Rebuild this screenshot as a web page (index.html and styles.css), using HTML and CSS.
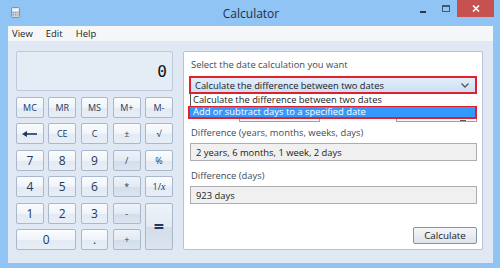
FILE: index.html
```html
<!DOCTYPE html>
<html lang="en">

<head>
    <meta charset="UTF-8">
    <title>Calculator</title>
    <link rel="stylesheet" href="styles.css">
</head>

<body>
    <div class="window">

        <!-- Title bar -->
        <div class="titlebar">
            <svg class="app-icon" width="9" height="11" viewBox="0 0 9 11">
                <rect x="0.5" y="0.5" width="8" height="10" rx="1" fill="#c9d6e6" stroke="#7d93ad"/>
                <rect x="1.5" y="1.5" width="6" height="2.5" fill="#f2f6fb"/>
                <rect x="1.5" y="5" width="1.5" height="1.2" fill="#8aa1bd"/>
                <rect x="3.75" y="5" width="1.5" height="1.2" fill="#8aa1bd"/>
                <rect x="6" y="5" width="1.5" height="1.2" fill="#e7a15a"/>
                <rect x="1.5" y="7.2" width="1.5" height="1.2" fill="#8aa1bd"/>
                <rect x="3.75" y="7.2" width="1.5" height="1.2" fill="#8aa1bd"/>
                <rect x="6" y="7.2" width="1.5" height="1.2" fill="#e7a15a"/>
            </svg>
            <div class="title">Calculator</div>
            <div class="controls">
                <div class="ctl"><span class="min"></span></div>
                <div class="ctl"><span class="max"></span></div>
                <div class="ctl close">
                    <svg width="8" height="7" viewBox="0 0 8 7">
                        <path d="M1 0.5 L7 6.5 M7 0.5 L1 6.5" stroke="#fff" stroke-width="1.6"/>
                    </svg>
                </div>
            </div>
        </div>

        <div class="client">
            <div class="menubar">
                <span>View</span>
                <span>Edit</span>
                <span>Help</span>
            </div>

            <div class="main">
                <!-- Standard calculator -->
                <div class="calc">
                    <div class="display">0</div>
                    <div class="keys">
                        <div class="key small">MC</div>
                        <div class="key small">MR</div>
                        <div class="key small">MS</div>
                        <div class="key small">M+</div>
                        <div class="key small">M-</div>

                        <div class="key">
                            <svg width="15" height="6" viewBox="0 0 15 6">
                                <path d="M15 3 H4" stroke="#1e395b" stroke-width="1.6"/>
                                <path d="M0 3 L5 0 V6 Z" fill="#1e395b"/>
                            </svg>
                        </div>
                        <div class="key small">CE</div>
                        <div class="key small">C</div>
                        <div class="key small">±</div>
                        <div class="key small">√</div>

                        <div class="key">7</div>
                        <div class="key">8</div>
                        <div class="key">9</div>
                        <div class="key op small">/</div>
                        <div class="key small">%</div>

                        <div class="key">4</div>
                        <div class="key">5</div>
                        <div class="key">6</div>
                        <div class="key op small">*</div>
                        <div class="key small">1/<i>x</i></div>

                        <div class="key">1</div>
                        <div class="key">2</div>
                        <div class="key">3</div>
                        <div class="key op small">-</div>
                        <div class="key op equals">=</div>

                        <div class="key zero">0</div>
                        <div class="key">.</div>
                        <div class="key op small">+</div>
                    </div>
                </div>

                <!-- Date calculation panel -->
                <div class="panel">
                    <div class="label">Select the date calculation you want</div>
                    <div class="combo">
                        <div class="select marked">
                            <span>Calculate the difference between two dates</span>
                            <svg width="8" height="5" viewBox="0 0 8 5">
                                <path d="M0.5 0.5 L4 4 L7.5 0.5" fill="none" stroke="#555" stroke-width="1.3"/>
                            </svg>
                        </div>
                        <div class="options">
                            <div class="option">Calculate the difference between two dates</div>
                            <div class="option active">Add or subtract days to a specified date</div>
                        </div>
                    </div>

                    <div class="dates">
                        <div class="date-box from"></div>
                        <div class="date-box to"><span class="tick"></span></div>
                    </div>

                    <div class="label">Difference (years, months, weeks, days)</div>
                    <div class="field">2 years, 6 months, 1 week, 2 days</div>

                    <div class="label">Difference (days)</div>
                    <div class="field">923 days</div>

                    <div class="actions">
                        <div class="button">Calculate</div>
                    </div>
                </div>
            </div>
        </div>
    </div>
</body>

</html>
```

FILE: styles.css
```css
/* Basic Reset */
body,
div,
span {
    margin: 0;
    padding: 0;
}

body {
    font-family: 'Open Sans', 'Noto Sans', sans-serif;
    background: #8fc4f4;
}

.window {
    width: 500px;
    height: 268px;
    background: #8fc4f4;
    display: flex;
    flex-direction: column;
}

/* Title bar */
.titlebar {
    height: 26px;
    display: grid;
    grid-template-columns: 1fr auto 1fr;
    align-items: start;
}

.app-icon {
    margin: 7px 0 0 11px;
}

.title {
    font-size: 12px;
    color: #1f2f44;
    margin-top: 5px;
    padding-left: 2px;
}

.controls {
    display: flex;
    justify-content: flex-end;
    margin-right: 6px;
}

.ctl {
    width: 23px;
    height: 18px;
    display: flex;
    align-items: center;
    justify-content: center;
}

.min {
    width: 6px;
    height: 2px;
    background: #27384b;
    margin-top: 5px;
}

.max {
    width: 6px;
    height: 4px;
    border: 1px solid #3f5873;
    border-top-width: 2px;
    margin-top: -1px;
}

.close {
    width: 37px;
    height: 17px;
    background: #c75050;
}

/* Client area */
.client {
    flex: 1;
    margin: 0 7px 5px 8px;
    display: flex;
    flex-direction: column;
    background: #dfe8f3;
}

.menubar {
    height: 15px;
    background: #f5f6f7;
    border-bottom: 1px solid #e4e8ee;
    display: flex;
    align-items: center;
    font-size: 9.5px;
    color: #1c1c1c;
}

.menubar span {
    margin-left: 4px;
    margin-right: 9px;
}

.main {
    flex: 1;
    display: flex;
    padding: 9px 10px 13px 8px;
    gap: 10px;
}

/* Calculator */
.calc {
    width: 157px;
    display: flex;
    flex-direction: column;
}

.display {
    height: 40px;
    box-sizing: border-box;
    border: 1px solid #bccadb;
    border-radius: 2px;
    background: #e4ecf6;
    font-family: 'DejaVu Sans Mono', monospace;
    font-size: 16px;
    color: #111;
    text-align: right;
    padding: 10px 5px 0 0;
}

.keys {
    margin-top: 6px;
    display: grid;
    grid-template-columns: repeat(5, 1fr);
    grid-template-rows: repeat(6, 21px);
    column-gap: 4.3px;
    row-gap: 5.4px;
}

.key {
    border: 1px solid #a9b8ca;
    border-radius: 2px;
    background: linear-gradient(#fafcfe 0%, #f0f4f9 50%, #e2eaf3 51%, #e8eef6 100%);
    display: flex;
    align-items: center;
    justify-content: center;
    font-size: 12px;
    color: #1e395b;
}

.key.small {
    font-size: 9px;
}

.key i {
    font-family: 'Liberation Serif', serif;
    font-size: 10px;
}

.key.op {
    background: linear-gradient(#eef3f9 0%, #e3eaf3 50%, #d3deeb 51%, #dbe4ef 100%);
}

.key.equals {
    grid-row: span 2;
    font-size: 18px;
    font-weight: bold;
}

.key.zero {
    grid-column: span 2;
}

/* Date panel */
.panel {
    flex: 1;
    background: #fff;
    border: 1px solid #b9c3cf;
    border-radius: 2px;
    padding: 7px 5px 5px 6px;
    display: flex;
    flex-direction: column;
    font-size: 9.4px;
    color: #1c1c1c;
}

.label {
    color: #3b4b5c;
    line-height: 12px;
    margin-left: 1px;
}

.combo {
    position: relative;
    margin-top: 5px;
}

.select {
    height: 18px;
    box-sizing: border-box;
    margin-left: -1px;
    background: linear-gradient(#e3eefa, #cddff3);
    display: flex;
    align-items: center;
    justify-content: space-between;
    padding: 0 6px 0 4px;
    font-size: 9.4px;
}

.marked {
    border: 2px solid #e0202c;
}

.options {
    position: absolute;
    top: 18px;
    left: 0;
    right: 0;
    background: #fff;
    border-left: 1px solid #555;
    font-size: 9.4px;
    line-height: 11px;
    z-index: 3;
}

.option {
    padding-left: 2px;
    height: 12px;
}

.option.active {
    background: #3399ff;
    color: #fff;
    margin-left: -3px;
    padding-left: 3px;
    height: 13px;
    line-height: 10px;
    box-sizing: border-box;
    border: 2px solid #e0202c;
    border-top-width: 1px;
}

.dates {
    height: 18px;
    margin-top: 10px;
    display: flex;
    justify-content: space-between;
}

.date-box {
    border: 1px solid #a0a0a0;
    position: relative;
}

.date-box.from {
    width: 79px;
    margin-left: 49px;
}

.date-box.to {
    width: 79px;
}

.tick {
    position: absolute;
    right: 10px;
    bottom: 0;
    width: 6px;
    height: 1px;
    background: #555;
}

.field {
    height: 18px;
    box-sizing: border-box;
    margin-top: 5px;
    border: 1px solid #abadb3;
    background: #f0f0f0;
    padding-left: 5px;
    display: flex;
    align-items: center;
}

.label + .field {
    margin-top: 4px;
}

.field + .label {
    margin-top: 9px;
}

.dates + .label {
    margin-top: 5px;
}

.actions {
    margin-top: auto;
    display: flex;
    justify-content: flex-end;
}

.button {
    width: 64px;
    height: 17px;
    box-sizing: border-box;
    border: 1px solid #7a94b2;
    border-radius: 2px;
    background: linear-gradient(#f4f6f8, #dde3ea);
    display: flex;
    align-items: center;
    justify-content: center;
    font-size: 9.8px;
}
```
